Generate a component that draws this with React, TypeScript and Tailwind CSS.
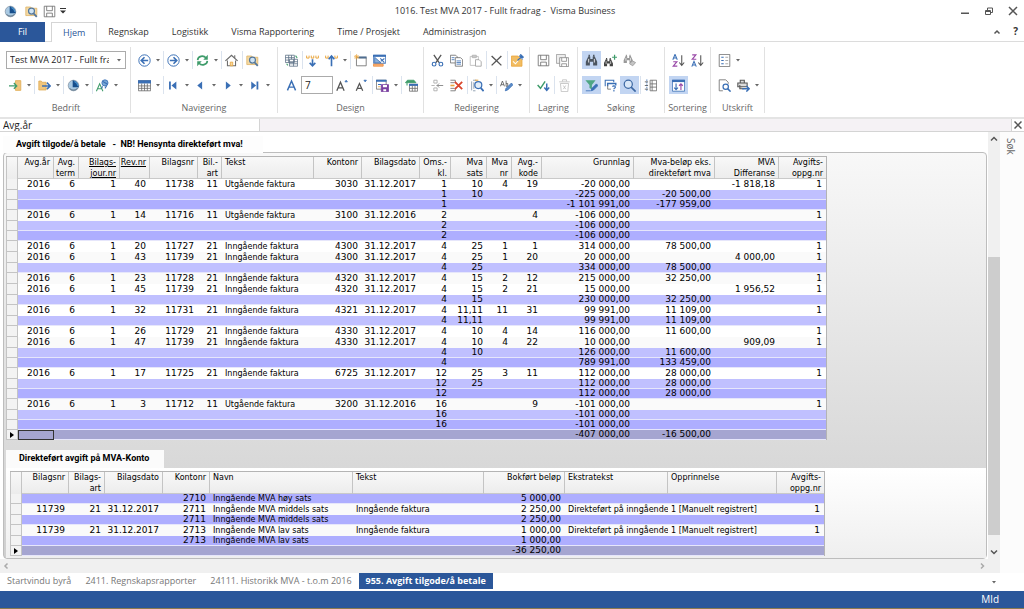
import type { ReactNode } from "react";
import { useState } from "react";
import clsx from "clsx";

type Column = { title: string[]; width: string; left?: boolean; underline?: boolean };
type Kind = "data" | "sub" | "total" | "sum";
type Row = { kind: Kind; cells: string[] };

const BLUE = "#3a6fb5";
const GRAY = "#6b6b6b";
const ORANGE = "#e9a53c";
const GREEN = "#3f9c6b";

const avgiftColumns: Column[] = [
  { title: ["Avg.år"], width: "w-[36px]" },
  { title: ["Avg.", "term"], width: "w-[25px]" },
  { title: ["Bilags-", "jour.nr"], width: "w-[41px]", underline: true },
  { title: ["Rev.nr"], width: "w-[30px]", underline: true },
  { title: ["Bilagsnr"], width: "w-[48px]" },
  { title: ["Bil.-", "art"], width: "w-[24px]" },
  { title: ["Tekst"], width: "w-[92px]", left: true },
  { title: ["Kontonr"], width: "w-[48px]" },
  { title: ["Bilagsdato"], width: "w-[58px]" },
  { title: ["Oms.-", "kl."], width: "w-[31px]" },
  { title: ["Mva", "sats"], width: "w-[36px]" },
  { title: ["Mva", "nr"], width: "w-[25px]" },
  { title: ["Avg.-", "kode"], width: "w-[30px]" },
  { title: ["Grunnlag"], width: "w-[92px]" },
  { title: ["Mva-beløp eks.", "direkteført mva"], width: "w-[81px]" },
  { title: ["MVA", "Differanse"], width: "w-[64px]" },
  { title: ["Avgifts-", "oppg.nr"], width: "w-[47px]" },
];

const data = (
  rev: string, bilag: string, art: string, konto: string, dato: string, kl: string,
  sats: string, nr: string, kode: string, grunnlag: string, belop = "", diff = "",
): Row => ({
  kind: "data",
  cells: [
    "2016", "6", "1", rev, bilag, art, art === "11" ? "Utgående faktura" : "Inngående faktura",
    konto, dato, kl, sats, nr, kode, grunnlag, belop, diff, "1",
  ],
});

const sum = (kind: Kind, kl: string, sats: string, grunnlag: string, belop = ""): Row => ({
  kind,
  cells: ["", "", "", "", "", "", "", "", "", kl, sats, "", "", grunnlag, belop, "", ""],
});

const avgiftRows: Row[] = [
  data("40", "11738", "11", "3030", "31.12.2017", "1", "10", "4", "19", "-20 000,00", "", "-1 818,18"),
  sum("sub", "1", "10", "-225 000,00", "-20 500,00"),
  sum("total", "1", "", "-1 101 991,00", "-177 959,00"),
  data("14", "11716", "11", "3100", "31.12.2016", "2", "", "", "4", "-106 000,00"),
  sum("sub", "2", "", "-106 000,00"),
  sum("total", "2", "", "-106 000,00"),
  data("20", "11727", "21", "4300", "31.12.2017", "4", "25", "1", "1", "314 000,00", "78 500,00"),
  data("43", "11739", "21", "4300", "31.12.2017", "4", "25", "1", "20", "20 000,00", "", "4 000,00"),
  sum("sub", "4", "25", "334 000,00", "78 500,00"),
  data("23", "11728", "21", "4320", "31.12.2017", "4", "15", "2", "12", "215 000,00", "32 250,00"),
  data("45", "11739", "21", "4320", "31.12.2017", "4", "15", "2", "21", "15 000,00", "", "1 956,52"),
  sum("sub", "4", "15", "230 000,00", "32 250,00"),
  data("32", "11731", "21", "4321", "31.12.2017", "4", "11,11", "11", "31", "99 991,00", "11 109,00"),
  sum("sub", "4", "11,11", "99 991,00", "11 109,00"),
  data("26", "11729", "21", "4330", "31.12.2017", "4", "10", "4", "14", "116 000,00", "11 600,00"),
  data("47", "11739", "21", "4330", "31.12.2017", "4", "10", "4", "22", "10 000,00", "", "909,09"),
  sum("sub", "4", "10", "126 000,00", "11 600,00"),
  sum("total", "4", "", "789 991,00", "133 459,00"),
  data("17", "11725", "21", "6725", "31.12.2017", "12", "25", "3", "11", "112 000,00", "28 000,00"),
  sum("sub", "12", "25", "112 000,00", "28 000,00"),
  sum("total", "12", "", "112 000,00", "28 000,00"),
  data("3", "11712", "11", "3200", "31.12.2016", "16", "", "", "9", "-101 000,00"),
  sum("sub", "16", "", "-101 000,00"),
  sum("total", "16", "", "-101 000,00"),
  sum("sum", "", "", "-407 000,00", "-16 500,00"),
];

const kontoColumns: Column[] = [
  { title: ["Bilagsnr"], width: "w-[47px]" },
  { title: ["Bilags-", "art"], width: "w-[36px]" },
  { title: ["Bilagsdato"], width: "w-[58px]" },
  { title: ["Kontonr"], width: "w-[47px]" },
  { title: ["Navn"], width: "w-[143px]", left: true },
  { title: ["Tekst"], width: "w-[131px]", left: true },
  { title: ["Bokført beløp"], width: "w-[81px]" },
  { title: ["Ekstratekst"], width: "w-[103px]", left: true },
  { title: ["Opprinnelse"], width: "w-[109px]", left: true },
  { title: ["Avgifts-", "oppg.nr"], width: "w-[47px]" },
];

const kontoRows: Row[] = [
  { kind: "total", cells: ["", "", "", "2710", "Inngående MVA høy sats", "", "5 000,00", "", "", ""] },
  { kind: "data", cells: ["11739", "21", "31.12.2017", "2711", "Inngående MVA middels sats", "Inngående faktura", "2 250,00", "Direkteført på inngående", "1 [Manuelt registrert]", "1"] },
  { kind: "total", cells: ["", "", "", "2711", "Inngående MVA middels sats", "", "2 250,00", "", "", ""] },
  { kind: "data", cells: ["11739", "21", "31.12.2017", "2713", "Inngående MVA lav sats", "Inngående faktura", "1 000,00", "Direkteført på inngående", "1 [Manuelt registrert]", "1"] },
  { kind: "total", cells: ["", "", "", "2713", "Inngående MVA lav sats", "", "1 000,00", "", "", ""] },
  { kind: "sum", cells: ["", "", "", "", "", "", "-36 250,00", "", "", ""] },
];

/* ---------- icons, all on a 16 x 16 grid ---------- */

function Svg({ children, size = "size-4" }: { children: ReactNode; size?: string }) {
  return (
    <svg viewBox="0 0 16 16" className={clsx(size, "shrink-0")} fill="none" stroke={GRAY} aria-hidden="true">
      {children}
    </svg>
  );
}

const globe = (
  <>
    <circle cx="8" cy="8" r="6.500" fill="#a9c9e2" stroke="#8798a8" />
    <path d="M7 1.500v8.500h7.500C14 5 11 2 7 1.500z" fill="#174f8c" stroke="none" />
    <path d="M3 11.500c3 2.500 7 2.500 10 0" stroke="#6d8294" strokeWidth="1.500" />
    <path d="M9 3c3 1 4 3 4.500 5.500" stroke="#4a93cf" strokeWidth="1.300" />
  </>
);
const folderSearch = (
  <>
    <path d="M1 2.500h6l1 1.500h6.500V13H1z" fill="#f3d9a4" stroke="#dfb467" />
    <circle cx="8" cy="7.500" r="3.700" fill="#cfe3f3" stroke="#55789c" strokeWidth="1.500" />
    <path d="M10.800 10.500l3.700 4" stroke="#55789c" strokeWidth="2.200" />
  </>
);
const floppy = (
  <>
    <path d="M1.500 1.500h13v13h-13z" />
    <path d="M4.500 1.500v5.500h7V1.500M4.500 14.500v-4.500h7v4.500" />
  </>
);
const folderIn = (
  <>
    <path d="M8 2h6.500v12H8z" fill="#f0c57c" stroke="#e0ac55" />
    <path d="M0 8.500h9M6 5l3.500 3.500L6 12" stroke={GREEN} strokeWidth="1.700" />
  </>
);
const folderOut = (
  <>
    <path d="M1 2.500h3l1 1.500h5v9.500H1z" fill="#f0c57c" stroke="#e0ac55" />
    <path d="M5 8.500h10M11 4.500l4 4-4 4" stroke={BLUE} strokeWidth="1.900" />
  </>
);
const fontGlobe = (
  <>
    <path d="M.5 15L4.500 6l4 9M2.300 12h4.500" stroke={GREEN} strokeWidth="1.300" />
    <circle cx="11" cy="4.800" r="3.800" fill="#79a7d6" stroke={BLUE} />
    <path d="M8 2.500c2 2 4 2 6 4M8 9l-1 2.500M13 8.500l-2 3" stroke={BLUE} strokeWidth="1.300" />
  </>
);
const back = (
  <>
    <circle cx="8" cy="8" r="7" stroke={BLUE} strokeWidth="1.200" />
    <path d="M12.500 8H4.500M8 4L4 8l4 4" stroke={BLUE} strokeWidth="2" />
  </>
);
const forward = (
  <>
    <circle cx="8" cy="8" r="7" stroke={BLUE} strokeWidth="1.200" />
    <path d="M3.500 8h8M8 4l4 4-4 4" stroke={BLUE} strokeWidth="2" />
  </>
);
const refresh = (
  <>
    <path d="M2 7.500C2.500 2.500 9 1 12.500 5M14 8.500C13.500 13.500 7 15 3.500 11" stroke={GREEN} strokeWidth="2" />
    <path d="M14.500 1v6H9zM1.500 15V9H7z" fill={GREEN} stroke="none" />
  </>
);
const home = (
  <>
    <path d="M.5 8.500L8 1.500l7.500 7" strokeWidth="1.500" />
    <path d="M3 8v6.500h10V8" fill="#fff" strokeWidth="1.300" />
    <path d="M6.500 14.500v-4.500h3v4.500z" fill="#f3d9a4" stroke={ORANGE} />
    <path d="M12 1.500V5" strokeWidth="1.300" />
  </>
);
const tableIcon = (
  <>
    <path d="M.5 2h15v12.500H.5z" fill="#fff" />
    <path d="M0 1.500h16V5.500H0z" fill={BLUE} stroke="none" />
    <path d="M.5 8.500h15M.5 11.500h15M4.500 5.500v9M8 5.500v9M11.500 5.500v9" />
  </>
);
const first = <path d="M2.500 3h2.200v10H2.500zM11.500 3v10L5.500 8z" fill={BLUE} stroke="none" />;
const prev = <path d="M10 3v10L4 8z" fill={BLUE} stroke="none" />;
const next = <path d="M6 3v10l6-5z" fill={BLUE} stroke="none" />;
const last = <path d="M4 3v10l6-5zM10.500 3h2.200v10h-2.200z" fill={BLUE} stroke="none" />;
const tables = (
  <>
    <path d="M.5 1.500h11v9H.5zM5.500 6.500h10v8.500h-10z" fill="#fff" stroke="#5f7388" />
    <path d="M.5 4.500h11M.5 7.500h5M4.500 1.500v9M8 1.500v5M5.500 9.500h10M5.500 12h10M10.500 6.500V15" stroke="#5f7388" />
    <path d="M13 2l2 3M2 12l1.500 2" stroke={GREEN} strokeWidth="1.300" />
  </>
);
const dropDown = (
  <>
    <path d="M.8 2v3h3V2M6.500 2v3h3V2M12.200 2v3h3V2" stroke={ORANGE} strokeWidth="1.200" />
    <path d="M8 6.500v8M4.500 11L8 14.500l3.500-3.500" stroke={BLUE} strokeWidth="2" />
  </>
);
const dropUp = (
  <>
    <path d="M.8 2v3h3V2M12.200 2v3h3V2" stroke={ORANGE} strokeWidth="1.200" />
    <path d="M8 15V3M4.500 6.500L8 2.500l3.500 4" stroke={BLUE} strokeWidth="2" />
  </>
);
const newWindow = (
  <>
    <path d="M3 4.500h12v10H3z" fill="#fff" />
    <path d="M6 3h9.500v2.500H6z" fill="#4f6d8f" stroke="none" />
    <path d="M0 3.500h6.500M3.200 .3v6.400M1 1.300l4.500 4.500M5.500 1.300L1 5.800" stroke={ORANGE} />
  </>
);
const designWindow = (
  <>
    <path d="M.5 1.500h15v10H.5z" fill="#fff" stroke={BLUE} />
    <path d="M0 1h16v2.500H0z" fill={BLUE} stroke="none" />
    <path d="M2 4v7h8z" fill="#8bb0dc" stroke={BLUE} />
    <path d="M9 5.500l5 5M14 5.500L9.500 9" stroke={BLUE} strokeWidth="1.300" />
    <path d="M.5 12.500h12V15H.5z" fill="#f7b07a" stroke="#ee8b3a" />
  </>
);
const letterA = <path d="M3 14L8 2.500 13 14M5 10h6" stroke={BLUE} strokeWidth="1.800" />;
const fontUp = (
  <>
    <path d="M1 14.500L5.500 4 10 14.500M3 11h5" stroke="#555" strokeWidth="1.600" />
    <path d="M12.500 1.500l1.500 2h-3z" fill={BLUE} stroke={BLUE} />
  </>
);
const fontDown = (
  <>
    <path d="M1.500 14.500l4-9 4 9M3.500 11.500h4.500" stroke="#555" strokeWidth="1.500" />
    <path d="M12.500 3.500l1.500-2h-3z" fill={BLUE} stroke={BLUE} />
  </>
);
const windowSave = (
  <>
    <path d="M.5 1.500h12v11H.5z" fill="#fff" />
    <path d="M0 1h13v2.500H0zM2.500 6h4v1.500h-4z" fill={BLUE} stroke="none" />
    <path d="M2.500 9.500h3" stroke={ORANGE} />
    <path d="M6.500 7h9v8.500h-9z" fill="#7a3fa0" stroke="#7a3fa0" />
    <path d="M8.500 7.500h5V10h-5zM9 12.500h3.500V15H9z" fill="#fff" stroke="none" />
  </>
);
const tableArrow = (
  <>
    <path d="M.5 4.500L3 1.500h8l2.500 3z" fill={GREEN} stroke={GREEN} />
    <path d="M2.500 4.500V8" stroke={GREEN} strokeWidth="1.300" />
    <path d="M5.500 6.500h10V15h-10z" fill="#fff" />
    <path d="M5 6h11v2.500H5z" fill={BLUE} stroke="none" />
    <path d="M5.500 11.500h10M9 8v7M12.300 8v7" />
  </>
);
const cut = (
  <>
    <path d="M3.500 1l6.500 9.500M12.500 1L6 10.500" stroke="#555" strokeWidth="1.600" />
    <circle cx="3.800" cy="12.500" r="2.300" stroke={BLUE} strokeWidth="1.400" />
    <circle cx="12.200" cy="12.500" r="2.300" stroke={BLUE} strokeWidth="1.400" />
  </>
);
const copy = (
  <>
    <path d="M.5 1.500h6.500l2 2v7.500H.5z" fill="#fff" />
    <path d="M6.500 4.500h6.500l2.500 2.500v8h-9z" fill="#fff" />
    <path d="M2 4.500h3.500M2 7h3.500M8 8.500h5.500M8 10.500h5.500M8 12.500h5.500" stroke={BLUE} />
  </>
);
const paste = (
  <>
    <path d="M1.500 3h10v11h-10z" stroke="#b9b9b9" />
    <path d="M4 1.500h5v3H4z" fill="#c9c9c9" stroke="#b0b0b0" />
    <path d="M8 7h4.500l2.500 2.500v5.500H8z" fill="#fff" stroke="#9b9b9b" />
  </>
);
const cross = <path d="M2 2.500l12 11.500M14 2.500L2 14" stroke="#555" strokeWidth="1.700" />;
const note = (
  <>
    <path d="M.5 2.500h8l5 5V15H.5z" fill="#f2bd62" stroke={ORANGE} />
    <path d="M2.500 9l3 3 3.500-4" stroke="#fff" strokeWidth="1.300" />
    <path d="M8 8l3-3M10 2l4.500 4.500M12 .8l3 3-3 1z" stroke={BLUE} fill={BLUE} strokeWidth="1.400" />
  </>
);
const insertRow = (
  <>
    <path d="M3.500 1.500h4v3.500h-4zM3.500 11h4v3.500h-4zM.5 8h4" stroke="#a5a5a5" />
    <path d="M7 8h8M10 5.500L7.500 8l2.500 2.500" stroke="#8e8e8e" strokeWidth="1.200" />
  </>
);
const deleteRow = (
  <>
    <path d="M.5 1.500h6M.5 4.500h5M.5 11.500h5M.5 14.500h6M6.500 1.500v3M6.500 11.500v3" />
    <path d="M.5 8h5" stroke={ORANGE} strokeWidth="2" />
    <path d="M6 3.500l9 9M15 3.500l-9 9" stroke="#d9452b" strokeWidth="2.200" />
  </>
);
const docSearch = (
  <>
    <path d="M.8 3v11M2.500 1.500h4M2.500 14.500h3M3.500 4v8" stroke="#7d8fa3" />
    <path d="M5 1.500h4" stroke={ORANGE} strokeWidth="1.300" />
    <circle cx="9" cy="7.500" r="4.300" fill="#e3eef8" stroke={BLUE} strokeWidth="1.500" />
    <path d="M12 11l3.500 4" stroke={BLUE} strokeWidth="2.200" />
  </>
);
const editText = (
  <>
    <path d="M.5 9L3 2.500 5.500 9M1.300 7h3.400M7.500 2v7h2V5.500h-2" stroke="#555" />
    <path d="M6.500 14.500l1-3 6.500-6.500 2 2-6.500 6.500z" fill="#5c8dc9" stroke={BLUE} />
  </>
);
const floppies = (
  <>
    <path d="M.5 .5h11v11H.5z" stroke="#999" fill="#eee" />
    <path d="M4.500 4.500h11v11h-11z" fill="#fff" stroke="#888" />
    <path d="M7 4.500V9h6V4.500M7 15.500v-3.500h6v3.500" stroke="#888" />
  </>
);
const checkDown = (
  <>
    <path d="M.8 7.500l3.500 4L10 3" stroke={GREEN} strokeWidth="1.800" />
    <path d="M12 5.500v8M9 10.500l3 3.500 3-3.500" stroke={BLUE} strokeWidth="1.800" />
  </>
);
const trash = (
  <path d="M1.500 3.500h13M5.500 3V1h5v2M3 5.500h10l-1 10H4zM6.500 8l3 4.500M9.500 8l-3 4.500" stroke="#bcbcbc" />
);
const glasses = (color: string) => (
  <>
    <path d="M4 3h2.500v3h3V3H12l3 6.500v4.500h-5V9.500H6V14H1V9.500z" fill={color} stroke="none" />
    <path d="M5.200 1v2.500M10.800 1v2.500" stroke={color} strokeWidth="1.800" />
    <path d="M4.500 6v4.500M11.500 6v4.500" stroke="#fff" />
  </>
);
const find = glasses("#4c5560");
const findAdd = (
  <>
    <g transform="translate(-1 4) scale(.8)">{glasses("#444")}</g>
    <path d="M13 1v6M10 4h6" stroke={GREEN} strokeWidth="1.500" />
  </>
);
const findNext = (
  <>
    <g transform="scale(.8)">{glasses("#9a9a9a")}</g>
    <path d="M8 12l3.500-3.500 4 2-3.500 4z" fill="#c5c5c5" stroke="#999" />
  </>
);
const filterEdit = (
  <>
    <path d="M.5 1.500h12.500L8.500 7.500V13L5.500 11V7.500z" fill="#4fa684" stroke="none" />
    <path d="M7.500 14.500l1-3 5.500-5.500 2 2-5.500 5.500z" fill={BLUE} stroke={BLUE} />
    <path d="M1 14.500h6" stroke={BLUE} />
  </>
);
const query = (
  <>
    <path d="M1.500 9V1.500H12V4" stroke={BLUE} strokeWidth="1.300" />
    <path d="M4.500 9V5.500h10V8" stroke={BLUE} strokeWidth="1.700" />
    <path d="M4.500 8v4.500h4" />
    <path d="M10.500 9.500c.5-1.500 3.500-1.500 3.500.5 0 1.200-1.800 1-1.800 2.500M12.200 13.500v2" stroke={BLUE} strokeWidth="1.400" />
  </>
);
const lens = (
  <>
    <circle cx="6.500" cy="6.500" r="5" stroke="#3c68a3" strokeWidth="1.500" fill="#d9e7f7" />
    <path d="M10 10l5.500 5.500" stroke="#3c68a3" strokeWidth="2" />
  </>
);
const listIcon = (
  <>
    <path d="M7.500 1.500h8v13h-8zM7.500 6h8M7.500 10h8M10 1.500v13" />
    <path d="M3.500 .5v15" stroke={BLUE} strokeDasharray="2 1" />
    <path d="M1 3.500h4M1 8h4M1 12.500h4" stroke="#555" />
  </>
);
const sortArrow = <path d="M12 1.500v12M9 10.500l3 3.500 3-3.500" stroke="#555" strokeWidth="1.300" />;
const sortAz = (
  <>
    <path d="M1 7l2.700-6.500L6.500 7M2 5h3.500" stroke={BLUE} strokeWidth="1.300" />
    <path d="M1.500 9.500H6L1.500 15H6.500" stroke="#9a4aa8" strokeWidth="1.400" />
    {sortArrow}
  </>
);
const sortZa = (
  <>
    <path d="M1.500 1H6L1.500 6.500H6.500" stroke="#9a4aa8" strokeWidth="1.400" />
    <path d="M1 15.500L3.700 9l2.800 6.500M2 13.500h3.500" stroke={BLUE} strokeWidth="1.300" />
    {sortArrow}
  </>
);
const sortWindow = (
  <>
    <path d="M.5 1.500h15V15H.5z" fill="#fff" stroke={BLUE} />
    <path d="M0 1h16v2.800H0z" fill={BLUE} stroke="none" />
    <path d="M5 5.500v7.500M2.700 10.500L5 13l2.300-2.500" stroke={BLUE} strokeWidth="1.400" />
    <path d="M11 13.500V6M8.700 8.300L11 6l2.300 2.300" stroke="#9a4aa8" strokeWidth="1.400" />
  </>
);
const report = (
  <>
    <path d="M1.500 .5h13v15h-13z" fill="#fff" />
    <path d="M4 4h3M4 8h3M4 12h3" stroke={BLUE} strokeWidth="1.400" />
    <path d="M9 4h3.500M9 8h3.500M9 12h3.500" stroke="#999" />
  </>
);
const preview = (
  <>
    <path d="M6 14.500H1.500V1h8l3 3v2" />
    <circle cx="9.500" cy="9.500" r="3.300" fill="#fff" stroke={BLUE} strokeWidth="1.500" />
    <path d="M11.800 11.800l3.700 3.700" stroke={BLUE} strokeWidth="1.900" />
  </>
);
const printer = (
  <>
    <path d="M4 5V1.500h5V5M1 5h11.500v4.500H1zM3.500 7.500V12H8" fill="#ddd" stroke="#555" strokeWidth="1.300" />
    <path d="M6.500 12h8.500M11.500 8.500L15 12l-3.500 3.500" stroke={BLUE} strokeWidth="1.700" />
  </>
);

/* ---------- ribbon ---------- */

function Tool({ icon, label, on = false }: { icon: ReactNode; label: string; on?: boolean }) {
  return (
    <button
      type="button"
      aria-label={label}
      title={label}
      className={clsx("flex h-[18px] w-[19px] items-center justify-center", on && "bg-[#c2d5f2]")}
    >
      <Svg size="size-[13px]">{icon}</Svg>
    </button>
  );
}

const CaretIcon = () => (
  <svg viewBox="0 0 4 3" className="h-[3px] w-1" aria-hidden="true">
    <path d="M0 0h4L2 2.500z" fill="#666" />
  </svg>
);

function Caret({ label = "Flere valg" }: { label?: string }) {
  return (
    <button type="button" aria-label={label} className="flex h-[18px] w-2 items-center justify-center">
      <CaretIcon />
    </button>
  );
}

const Split = () => <span className="ml-px h-[18px] w-px bg-[#dbe3ee]" />;

function Group({ title, width, rows }: { title: string; width: string; rows: [ReactNode, ReactNode] }) {
  return (
    <section className={clsx("flex shrink-0 flex-col border-r border-[#e1e1e1] pt-1", width)}>
      <div className="flex h-[18px] items-center pl-1">{rows[0]}</div>
      <div className="mt-[7px] flex h-[18px] items-center pl-1">{rows[1]}</div>
      <h2 className="mt-2 text-center text-[9px] leading-3 text-[#666]">{title}</h2>
    </section>
  );
}

function Ribbon() {
  const [fontSize, setFontSize] = useState("7");

  return (
    <div className="flex h-[77px] border-b-2 border-[#e4e4e4] pt-[5px] pb-1">
      <Group
        title="Bedrift"
        width="w-[131px] pl-0.5"
        rows={[
          <div key="bedrift" className="mr-1 flex h-[18px] flex-1 items-center border border-[#ababab] bg-white pr-1">
            <select
              aria-label="Bedrift"
              className="w-0 flex-1 appearance-none overflow-hidden pl-[3px] text-[9px] text-clip text-[#222]"
            >
              <option>Test MVA 2017 - Fullt fradrag</option>
            </select>
            <span className="w-2" />
            <CaretIcon />
          </div>,
          <>
            <Tool icon={folderIn} label="Åpne bedrift" /><Caret /><Split />
            <Tool icon={folderOut} label="Bytt bedrift" /><Caret /><Split />
            <Tool icon={globe} label="Visma" /><Caret /><Split />
            <Tool icon={fontGlobe} label="Språk" /><Caret />
          </>,
        ]}
      />
      <Group
        title="Navigering"
        width="w-[147px]"
        rows={[
          <>
            <Tool icon={back} label="Tilbake" /><Caret /><Split />
            <Tool icon={forward} label="Frem" /><Caret /><Split />
            <Tool icon={refresh} label="Oppdater" /><Caret /><Split />
            <Tool icon={home} label="Hjem" /><Split />
            <Tool icon={folderSearch} label="Finn vindu" />
          </>,
          <>
            <Tool icon={tableIcon} label="Tabell" /><Caret /><Split />
            <Tool icon={first} label="Første" /><Caret />
            <Tool icon={prev} label="Forrige" /><Caret />
            <Tool icon={next} label="Neste" /><Caret />
            <Tool icon={last} label="Siste" /><Caret />
          </>,
        ]}
      />
      <Group
        title="Design"
        width="w-[146px]"
        rows={[
          <>
            <Tool icon={tables} label="Kolonner" /><Split />
            <Tool icon={dropDown} label="Sett inn under" />
            <Tool icon={dropUp} label="Sett inn over" /><Caret /><Split />
            <Tool icon={newWindow} label="Nytt vindu" />
            <Tool icon={designWindow} label="Design vindu" />
          </>,
          <>
            <Tool icon={letterA} label="Skrift" />
            <input
              aria-label="Skriftstørrelse"
              value={fontSize}
              onChange={(e) => setFontSize(e.target.value)}
              className="h-[18px] w-8 border border-[#ababab] px-[3px] text-[10px] text-[#222]"
            />
            <Tool icon={fontUp} label="Større skrift" />
            <Tool icon={fontDown} label="Mindre skrift" /><Split />
            <Tool icon={windowSave} label="Lagre oppsett" /><Caret /><Split />
            <Tool icon={tableArrow} label="Hent oppsett" />
          </>,
        ]}
      />
      <Group
        title="Redigering"
        width="w-[106px]"
        rows={[
          <>
            <Tool icon={cut} label="Klipp ut" />
            <Tool icon={copy} label="Kopier" />
            <Tool icon={paste} label="Lim inn" /><Split />
            <Tool icon={cross} label="Slett" /><Split />
            <Tool icon={note} label="Notat" />
          </>,
          <>
            <Tool icon={insertRow} label="Sett inn rad" />
            <Tool icon={deleteRow} label="Slett rad" /><Split />
            <Tool icon={docSearch} label="Slå opp" /><Caret /><Split />
            <Tool icon={editText} label="Rediger tekst" /><Caret />
          </>,
        ]}
      />
      <Group
        title="Lagring"
        width="w-[48px]"
        rows={[
          <><Tool icon={floppy} label="Lagre" /><Tool icon={floppies} label="Lagre alle" /></>,
          <><Tool icon={checkDown} label="Bekreft" /><Split /><Tool icon={trash} label="Forkast" /></>,
        ]}
      />
      <Group
        title="Søking"
        width="w-[87px]"
        rows={[
          <>
            <Tool icon={find} label="Søk" on />
            <Tool icon={findAdd} label="Utvid søk" />
            <Tool icon={findNext} label="Søk neste" />
          </>,
          <>
            <Tool icon={filterEdit} label="Filter" on />
            <Tool icon={query} label="Spørring" />
            <Tool icon={lens} label="Forstørr" on /><Split />
            <Tool icon={listIcon} label="Liste" />
          </>,
        ]}
      />
      <Group
        title="Sortering"
        width="w-[46px]"
        rows={[
          <><Tool icon={sortAz} label="Stigende" /><Tool icon={sortZa} label="Synkende" /></>,
          <Tool key="sort" icon={sortWindow} label="Sortering" on />,
        ]}
      />
      <Group
        title="Utskrift"
        width="w-[54px]"
        rows={[
          <><Tool icon={report} label="Rapport" /><Caret /></>,
          <><Tool icon={preview} label="Forhåndsvisning" /><Tool icon={printer} label="Skriv ut" /><Caret /></>,
        ]}
      />
    </div>
  );
}

/* ---------- tables ---------- */

const rowColor: Record<Kind, string> = {
  data: "odd:bg-white even:bg-[#fafafa]",
  sub: "bg-[#c0c0ff]",
  total: "bg-[#aeaeff]",
  sum: "bg-[#a5a5d1]",
};

function Grid({ label, columns, rows, width }: { label: string; columns: Column[]; rows: Row[]; width: string }) {
  return (
    <table
      aria-label={label}
      className={clsx(
        "table-fixed border-separate border-spacing-0 border-t border-r border-[#b4b4b4] font-['DejaVu_Sans',sans-serif] text-[8px] text-black",
        width,
      )}
    >
      <colgroup>
        <col className="w-3" />
        {columns.map((c, i) => <col key={i} className={c.width} />)}
      </colgroup>
      <thead>
        <tr className="h-[22px] bg-linear-to-b from-[#f8f8f8] to-[#ececec] align-top leading-[11px]">
          <th className="border-x border-[#c4c4c4] p-0" />
          {columns.map((c, i) => (
            <th
              key={i}
              scope="col"
              className={clsx(
                "overflow-hidden border-[#c4c4c4] p-0 font-normal whitespace-nowrap shadow-[inset_0_-1px_#c9c9c9]",
                i < columns.length - 1 && "border-r",
                c.left ? "pl-[3px] text-left" : "pr-[3px] text-right",
                c.underline && "underline",
              )}
            >
              {c.title.map((line) => <div key={line}>{line}</div>)}
            </th>
          ))}
        </tr>
      </thead>
      <tbody>
        {rows.map((r, n) => (
          <tr key={n} className={clsx(rowColor[r.kind], r.kind === "data" ? "h-[11px] leading-[11px]" : "h-[10px] leading-[9px]")}>
            <th className="border-x border-b border-[#c4c4c4] bg-[#f3f3f3] p-0">
              {r.kind === "sum" && (
                <svg viewBox="0 0 4 6" className="mx-auto h-1.5 w-1" aria-hidden="true">
                  <path d="M0 0l4 3-4 3z" fill="#000" />
                </svg>
              )}
            </th>
            {r.cells.map((cell, i) => (
              <td
                key={i}
                className={clsx(
                  "overflow-hidden p-0 whitespace-nowrap",
                  r.kind !== "data" && "border-b border-[#e6e6fb]",
                  columns[i].left ? "pl-[3px]" : "pr-1 text-right text-[9px]",
                  r.kind === "sum" && i === 0 && columns.length > 10 && "outline -outline-offset-1 outline-[#333]",
                )}
              >
                {cell}
              </td>
            ))}
          </tr>
        ))}
      </tbody>
    </table>
  );
}

function Chevron({ d, color = "#555" }: { d: string; color?: string }) {
  return (
    <svg viewBox="0 0 8 8" className="size-2" fill="none" stroke={color} strokeWidth="1.500" aria-hidden="true">
      <path d={d} />
    </svg>
  );
}

const menuTabs = ["Hjem", "Regnskap", "Logistikk", "Visma Rapportering", "Time / Prosjekt", "Administrasjon"];
const windows = [
  "Startvindu byrå",
  "2411. Regnskapsrapporter",
  "24111. Historikk MVA - t.o.m 2016",
  "955. Avgift tilgode/å betale",
];

export default function App() {
  const [menu, setMenu] = useState("Hjem");
  const [active, setActive] = useState(windows[3]);
  const [filter, setFilter] = useState("Avg.år");

  return (
    <div className="flex min-h-screen flex-col bg-white font-['Open_Sans','Noto_Sans',sans-serif] text-[9px] text-[#333]">
      <header className="flex h-[22px] items-center">
        <div className="flex w-[75px] items-center gap-1 pl-1">
          <button type="button" aria-label="Visma"><Svg size="size-[13px]">{globe}</Svg></button>
          <button type="button" aria-label="Finn" className="ml-1"><Svg size="size-[13px]">{folderSearch}</Svg></button>
          <button type="button" aria-label="Lagre" className="ml-px"><Svg size="size-[13px]">{floppy}</Svg></button>
          <button type="button" aria-label="Tilpass">
            <svg viewBox="0 0 6 6" className="size-1.5" aria-hidden="true">
              <path d="M0 0h6v1H0zM0 2.500h6l-3 3z" fill="#333" />
            </svg>
          </button>
        </div>
        <h1 className="flex-1 text-center whitespace-pre">1016. Test MVA 2017 - Fullt fradrag -  Visma Business</h1>
        <div className="flex w-[89px] items-center justify-end gap-3.5 pr-1.5">
          <button type="button" aria-label="Minimer">
            <svg viewBox="0 0 10 10" className="size-2.5" aria-hidden="true"><path d="M1 6.500h8v1.500H1z" fill="#555" /></svg>
          </button>
          <button type="button" aria-label="Gjenopprett">
            <svg viewBox="0 0 10 10" className="size-2.5" fill="none" stroke="#555" aria-hidden="true">
              <path d="M1.500 4.500h5v4h-5zM3.500 4V2h5v4.500H7M1.500 5.500h5" />
            </svg>
          </button>
          <button type="button" aria-label="Lukk">
            <svg viewBox="0 0 10 10" className="size-2.5" stroke="#555" strokeWidth="1.500" aria-hidden="true">
              <path d="M1 1l8 8M9 1L1 9" />
            </svg>
          </button>
        </div>
      </header>

      <nav className="flex h-5 items-stretch border-b border-[#dcdcdc]">
        <button type="button" className="-mb-px w-[45px] bg-[#2b579a] text-white">Fil</button>
        <div className="ml-1.5 flex flex-1">
          {menuTabs.map((tab) => (
            <button
              key={tab}
              type="button"
              onClick={() => setMenu(tab)}
              className={clsx(
                "px-[11px]",
                menu === tab ? "-mb-px border border-b-0 border-[#d5d5d5] bg-white text-[#2b579a]" : "border-r border-transparent",
              )}
            >
              {tab}
            </button>
          ))}
        </div>
        <div className="flex items-center gap-3 pr-1.5">
          <button type="button" aria-label="Skjul båndet"><Chevron d="M1.500 5.500L4 3l2.500 2.500" /></button>
          <button type="button" aria-label="Hjelp" className="text-[10px] font-bold">?</button>
        </div>
      </nav>

      <Ribbon />

      <div className="flex h-[13px] border-b border-[#d4d4d4] bg-[#f5f2f5]">
        <input
          aria-label="Filter"
          value={filter}
          onChange={(e) => setFilter(e.target.value)}
          className="w-[260px] border-r border-[#d4d4d4] bg-white pl-[3px] text-[10px] text-[#222]"
        />
        <button type="button" aria-label="Lukk filter" className="ml-auto flex w-[13px] items-center justify-center border-l border-[#d4d4d4] bg-white">
          <Chevron d="M.5 .5l7 7M7.500 .5l-7 7" />
        </button>
      </div>

      <div className="flex flex-1">
        <div className="flex min-w-0 flex-1 flex-col">
          <main className="flex flex-1 flex-col pt-1 pr-px pl-[3px]">
            <h2 className="relative -mb-px h-[17px] w-[260px] bg-[#fdfdfd] pl-[13px] font-[Roboto,sans-serif] text-[9px] leading-4 font-bold whitespace-pre text-black">
              Avgift tilgode/å betale   -  NB! Hensynta direkteført mva!
            </h2>
            <div className="flex flex-1 flex-col rounded-sm border border-[#bdbdbd] bg-linear-to-b from-[#f8f8f8] to-[#cfcfcf] pt-[3px] pl-0.5">
              <Grid label="Avgift tilgode/å betale" columns={avgiftColumns} rows={avgiftRows} width="w-[820px]" />
              <h2 className="mt-2.5 h-[18px] w-[158px] bg-[#fbfbfb] pl-[13px] font-[Roboto,sans-serif] text-[9px] leading-4 font-bold text-black">
                Direkteført avgift på MVA-Konto
              </h2>
              <div className="flex-1 bg-linear-to-b from-white to-[#efefef] pt-[3px] pb-0.5 pl-1">
                <Grid label="Direkteført avgift på MVA-Konto" columns={kontoColumns} rows={kontoRows} width="w-[814px]" />
              </div>
            </div>
          </main>
          <div className="flex h-[14px] items-center justify-between bg-[#f0f0f0] px-0.5">
            <button type="button" aria-label="Rull til venstre"><Chevron d="M5.500 1.500L3 4l2.500 2.500" color="#aaa" /></button>
            <button type="button" aria-label="Rull til høyre"><Chevron d="M3 1.500L5.500 4 3 6.500" color="#aaa" /></button>
          </div>
        </div>
        <div className="flex w-3 flex-col items-center bg-[#f0f0f0] pb-[14px]">
          <button type="button" aria-label="Rull opp" className="flex h-[14px] items-center"><Chevron d="M1 5.500L4 2.500l3 3" /></button>
          <span className="flex-[111]" />
          <span className="w-full flex-[278] bg-[#cdcdcd]" />
          <span className="flex-[10]" />
          <button type="button" aria-label="Rull ned" className="flex h-[14px] items-center"><Chevron d="M1 2.500l3 3 3-3" /></button>
        </div>
        <aside className="w-6 bg-[#fcfcfc] pt-1.5 pl-1">
          <button type="button" className="text-[10px] leading-[14px] text-[#666] [writing-mode:vertical-rl]">Søk</button>
        </aside>
      </div>

      <nav className="flex h-[18px] items-start">
        {windows.map((w) => (
          <button
            key={w}
            type="button"
            onClick={() => setActive(w)}
            className={clsx(
              "h-4 px-[7px] whitespace-nowrap",
              active === w ? "bg-[#2b579a] font-bold text-white" : "text-[#777]",
            )}
          >
            {w}
          </button>
        ))}
        <span className="ml-auto pr-[26px]"><Caret label="Flere vinduer" /></span>
      </nav>
      <footer className="flex h-[18px] items-center justify-end border-b border-[#8b7a4f] bg-[#2b579a] pr-[25px] text-[10px] text-white">
        Mld
      </footer>
    </div>
  );
}
